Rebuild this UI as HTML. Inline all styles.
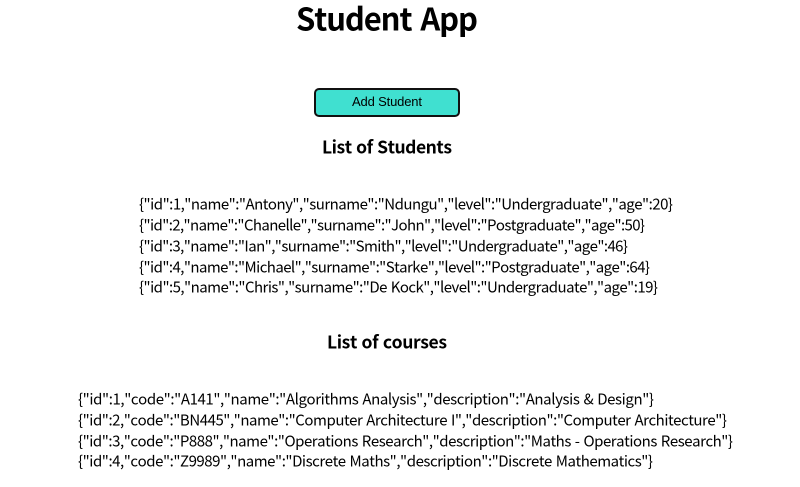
<!DOCTYPE html>
<html>
<head>
<meta charset="utf-8">
<style>
html,body{margin:0;padding:0;background:#fff;width:800px;height:487px;overflow:hidden}
svg{display:block;position:absolute;left:0;top:0}
text{font-family:"Noto Sans CJK JP","Liberation Sans",sans-serif;fill:#000;font-kerning:none}
.r{font-size:15px;word-spacing:1px}
.b{font-weight:bold;word-spacing:1px}
.a{font-family:"Liberation Sans",sans-serif;word-spacing:0}
</style>
</head>
<body>
<svg width="800" height="487" viewBox="0 0 800 487" xmlns="http://www.w3.org/2000/svg">
<text class="b" x="296" y="30.5" font-size="31" textLength="182" lengthAdjust="spacing" style="word-spacing:3px">Student App</text>
<rect x="315" y="89" width="144" height="27" rx="4" ry="4" fill="#40e0d0" stroke="#111" stroke-width="2"/>
<text class="a" x="352" y="106" font-size="13" textLength="70" lengthAdjust="spacing">Add Student</text>
<text class="b" x="322" y="153.5" font-size="17.5" textLength="130" lengthAdjust="spacing">List of Students</text>
<text class="r" x="139" y="209.5" textLength="534" lengthAdjust="spacing">{"id":1,"name":"Antony","surname":"Ndungu","level":"Undergraduate","age":20}</text>
<text class="r" x="139" y="230.5" textLength="506" lengthAdjust="spacing">{"id":2,"name":"Chanelle","surname":"John","level":"Postgraduate","age":50}</text>
<text class="r" x="139" y="251.5" textLength="489" lengthAdjust="spacing">{"id":3,"name":"Ian","surname":"Smith","level":"Undergraduate","age":46}</text>
<text class="r" x="139" y="272.5" textLength="511" lengthAdjust="spacing">{"id":4,"name":"Michael","surname":"Starke","level":"Postgraduate","age":64}</text>
<text class="r" x="139" y="292.5" textLength="519" lengthAdjust="spacing">{"id":5,"name":"Chris","surname":"De Kock","level":"Undergraduate","age":19}</text>
<text class="b" x="327" y="348.5" font-size="17.5" textLength="120" lengthAdjust="spacing">List of courses</text>
<text class="r" x="78" y="404.5" textLength="576" lengthAdjust="spacing">{"id":1,"code":"A141","name":"Algorithms Analysis","description":"Analysis &amp; Design"}</text>
<text class="r" x="78" y="425.5" textLength="649" lengthAdjust="spacing">{"id":2,"code":"BN445","name":"Computer Architecture I","description":"Computer Architecture"}</text>
<text class="r" x="78" y="446.5" textLength="655" lengthAdjust="spacing">{"id":3,"code":"P888","name":"Operations Research","description":"Maths - Operations Research"}</text>
<text class="r" x="78" y="466.5" textLength="575" lengthAdjust="spacing">{"id":4,"code":"Z9989","name":"Discrete Maths","description":"Discrete Mathematics"}</text>
</svg>
</body>
</html>
